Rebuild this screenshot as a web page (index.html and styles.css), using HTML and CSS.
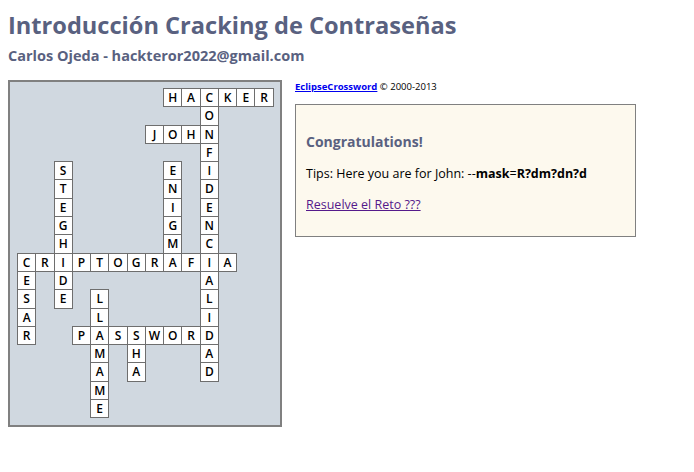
FILE: index.html
```html
<!DOCTYPE html>
<html lang="es">
<head>
<meta charset="utf-8">
<title>Introducción Cracking de Contraseñas</title>
<link rel="stylesheet" href="styles.css">
</head>
<body>
<header class="header">
  <h1 class="title">Introducción Cracking de Contraseñas</h1>
  <h2 class="subtitle">Carlos Ojeda - hackteror2022@gmail.com</h2>
</header>
<main class="content">
  <div class="puzzle">
    <div class="grid">
      <span></span><span></span><span></span><span></span><span></span><span></span><span></span><span></span><span class="c">H</span><span class="c">A</span><span class="c">C</span><span class="c">K</span><span class="c">E</span><span class="c">R</span>
      <span></span><span></span><span></span><span></span><span></span><span></span><span></span><span></span><span></span><span></span><span class="c">O</span><span></span><span></span><span></span>
      <span></span><span></span><span></span><span></span><span></span><span></span><span></span><span class="c">J</span><span class="c">O</span><span class="c">H</span><span class="c">N</span><span></span><span></span><span></span>
      <span></span><span></span><span></span><span></span><span></span><span></span><span></span><span></span><span></span><span></span><span class="c">F</span><span></span><span></span><span></span>
      <span></span><span></span><span class="c">S</span><span></span><span></span><span></span><span></span><span></span><span class="c">E</span><span></span><span class="c">I</span><span></span><span></span><span></span>
      <span></span><span></span><span class="c">T</span><span></span><span></span><span></span><span></span><span></span><span class="c">N</span><span></span><span class="c">D</span><span></span><span></span><span></span>
      <span></span><span></span><span class="c">E</span><span></span><span></span><span></span><span></span><span></span><span class="c">I</span><span></span><span class="c">E</span><span></span><span></span><span></span>
      <span></span><span></span><span class="c">G</span><span></span><span></span><span></span><span></span><span></span><span class="c">G</span><span></span><span class="c">N</span><span></span><span></span><span></span>
      <span></span><span></span><span class="c">H</span><span></span><span></span><span></span><span></span><span></span><span class="c">M</span><span></span><span class="c">C</span><span></span><span></span><span></span>
      <span class="c">C</span><span class="c">R</span><span class="c">I</span><span class="c">P</span><span class="c">T</span><span class="c">O</span><span class="c">G</span><span class="c">R</span><span class="c">A</span><span class="c">F</span><span class="c">I</span><span class="c">A</span><span></span><span></span>
      <span class="c">E</span><span></span><span class="c">D</span><span></span><span></span><span></span><span></span><span></span><span></span><span></span><span class="c">A</span><span></span><span></span><span></span>
      <span class="c">S</span><span></span><span class="c">E</span><span></span><span class="c">L</span><span></span><span></span><span></span><span></span><span></span><span class="c">L</span><span></span><span></span><span></span>
      <span class="c">A</span><span></span><span></span><span></span><span class="c">L</span><span></span><span></span><span></span><span></span><span></span><span class="c">I</span><span></span><span></span><span></span>
      <span class="c">R</span><span></span><span></span><span class="c">P</span><span class="c">A</span><span class="c">S</span><span class="c">S</span><span class="c">W</span><span class="c">O</span><span class="c">R</span><span class="c">D</span><span></span><span></span><span></span>
      <span></span><span></span><span></span><span></span><span class="c">M</span><span></span><span class="c">H</span><span></span><span></span><span></span><span class="c">A</span><span></span><span></span><span></span>
      <span></span><span></span><span></span><span></span><span class="c">A</span><span></span><span class="c">A</span><span></span><span></span><span></span><span class="c">D</span><span></span><span></span><span></span>
      <span></span><span></span><span></span><span></span><span class="c">M</span><span></span><span></span><span></span><span></span><span></span><span></span><span></span><span></span><span></span>
      <span></span><span></span><span></span><span></span><span class="c">E</span><span></span><span></span><span></span><span></span><span></span><span></span><span></span><span></span><span></span>
    </div>
  </div>
  <aside class="side">
    <p class="copyright"><a class="brand" href="#">EclipseCrossword</a> © 2000-2013</p>
    <div class="congrats">
      <h3 class="congrats-title">Congratulations!</h3>
      <p class="tips">Tips: Here you are for John: --<b>mask</b>=<b>R?dm?dn?d</b></p>
      <p class="reto"><a class="reto-link" href="#">Resuelve el Reto ???</a></p>
    </div>
  </aside>
</main>
</body>
</html>
```
FILE: styles.css
```css
html, body {
  margin: 0;
  padding: 0;
  background: #ffffff;
}
body {
  padding: 8px;
  font-family: "Open Sans", "Noto Sans", sans-serif;
  color: #000;
}
.header {
  padding-top: 2px;
}
.title {
  margin: 0;
  font-size: 23.6px;
  line-height: 30px;
  font-weight: 700;
  color: #596180;
}
.subtitle {
  margin: 6px 0 0;
  font-size: 14.5px;
  line-height: 20px;
  font-weight: 700;
  color: #596180;
}
.content {
  display: flex;
  align-items: flex-start;
  margin-top: 14px;
}
.puzzle {
  flex: none;
  width: 263px;
  height: 337px;
  border: 2px solid #808080;
  background: #d0d8e0;
  padding: 6px 0 0 7px;
  box-sizing: content-box;
}
.grid {
  display: grid;
  grid-template-columns: repeat(14, 18.28px);
  grid-template-rows: repeat(18, 18.3px);
}
.grid span {
  display: block;
}
.grid .c {
  width: 19.28px;
  height: 19.3px;
  box-sizing: border-box;
  border: 1px solid #6e6e6e;
  background: #ffffff;
  font-size: 12px;
  line-height: 17px;
  font-weight: 600;
  text-align: center;
  color: #000;
}
.side {
  margin-left: 13px;
  width: 341px;
}
.copyright {
  margin: 0;
  font-size: 9.5px;
  line-height: 14px;
}
.brand {
  color: #0000ee;
  font-weight: 700;
}
.congrats {
  margin-top: 10px;
  border: 1px solid #808080;
  background: #fdf9ee;
  padding: 27px 10px 22px;
}
.congrats-title {
  margin: 0;
  font-size: 14px;
  line-height: 20px;
  font-weight: 700;
  color: #596180;
}
.tips {
  margin: 13px 0 0;
  font-size: 12.5px;
  line-height: 18px;
}
.reto {
  margin: 13px 0 0;
  font-size: 12.5px;
  line-height: 18px;
}
.reto-link {
  color: #551a8b;
}
```
